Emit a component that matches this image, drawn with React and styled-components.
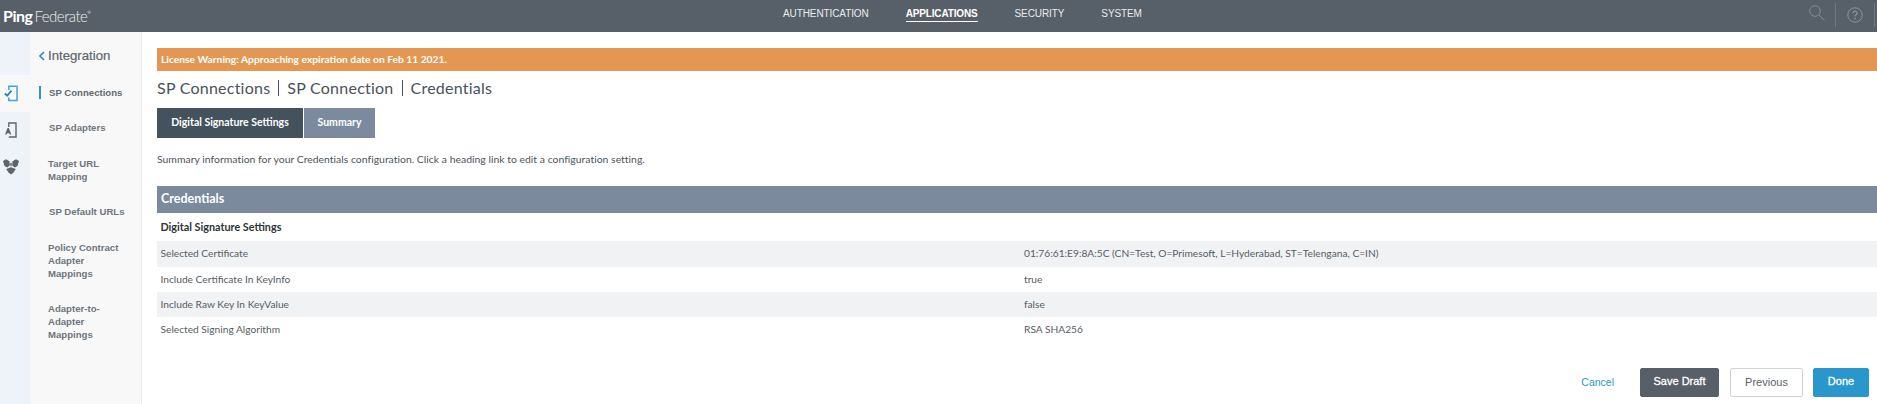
import React from "react";
import styled, { createGlobalStyle } from "styled-components";

const Global = createGlobalStyle`
  html, body { margin: 0; padding: 0; background: #fff; }
  body { font-family: "Lato", "Liberation Sans", sans-serif; overflow: hidden; }
  #root { width: 1877px; height: 404px; }
  * { box-sizing: border-box; }
`;
const Page = styled.div`display: flex; flex-direction: column; width: 1877px; height: 404px; overflow: hidden;`;
const Header = styled.header`
  height: 32px; flex: none; background: #576068; display: flex; align-items: center;
  justify-content: space-between; padding: 0 0 0 3px; position: relative;
`;
const Logo = styled.div`
  color: #fff; font: 400 15px/30px "Lato", sans-serif; letter-spacing: -0.5px; white-space: nowrap;
  b { font-size: 16px; font-weight: 700; margin-right: 2px; letter-spacing: -0.5px; }
  span { font-weight: 300; color: #eef0f1; }
  sup { font-size: 4px; vertical-align: 8px; line-height: 0; }
`;
const Nav = styled.nav`
  position: absolute; left: 783px; top: 0; height: 32px; display: flex; gap: 37px;
`;
const NavItem = styled.a`
  font: ${p => (p.$active ? 700 : 400)} 10px/15px "Liberation Sans", sans-serif;
  color: ${p => (p.$active ? "#fff" : "#e9ebed")};
  height: 16px; margin-top: 6px; white-space: nowrap; display: block;
  letter-spacing: ${p => (p.$active ? "-0.15px" : "-0.1px")};
  border-bottom: ${p => (p.$active ? "1px solid #fff" : "none")};
`;
const Tools = styled.div`display: flex; align-items: center; height: 32px; margin-right: 2px;`;
const SearchBox = styled.div`width: 26px; height: 32px; display: flex; align-items: flex-start; padding-top: 5px;`;
const Help = styled.div`
  width: 40px; height: 24px; margin-top: -2px; border-left: 1px solid #727a81; border-right: 1px solid #727a81;
  display: flex; align-items: center; justify-content: center;
`;
const Body = styled.div`flex: 1; display: flex; min-height: 0;`;
const Rail = styled.div`width: 30px; flex: none; background: #edf3f8; padding-top: 43px; display: flex; flex-direction: column;`;
const RailItem = styled.div`
  height: 37px; display: flex; align-items: center; justify-content: center;
  background: ${p => (p.$active ? "#f8f8f8" : "transparent")};
  padding: 0 9px 1px 0;
`;
const Side = styled.aside`
  width: 112px; flex: none; background: #f8f8f8; border-right: 1px solid #e9e9e9; padding: 15px 0 0 9px;
`;
const Back = styled.div`
  display: flex; align-items: center; gap: 3px; font: 400 13.2px/18px "Liberation Sans", sans-serif;
  color: #5f6770; margin: 0 0 21px 0; -webkit-text-stroke: 0.2px #5f6770;
`;
const SideList = styled.div`display: flex; flex-direction: column;`;
const SideItem = styled.div`
  font: 700 9.6px/13px "Liberation Sans", sans-serif; color: #6f767d;
  padding-left: ${p => (p.$single ? "10px" : "9px")}; margin-bottom: ${p => p.$gap}px; position: relative;
  ${p => p.$active && `color:#62696f; &::before { content: ""; position: absolute; left: 0; top: 0; width: 2px; height: 13px; background: #2996cc; }`}
`;
const Main = styled.main`flex: 1; min-width: 0; padding: 16px 0 0 15px; display: flex; flex-direction: column;`;
const Banner = styled.div`
  height: 23px; background: #e39752; color: #fff; padding-left: 4px;
  font: 700 10.25px/22px "Lato", sans-serif;
`;
const Title = styled.h1`
  display: flex; align-items: center; margin: 8px 0 0; height: 18px;
  font: 400 16px/18px "Lato", sans-serif; color: #4a5259; letter-spacing: 0.24px;
  i { width: 1px; height: 16px; background: #4a5259; margin: 0 8px; }
`;
const Tabs = styled.div`display: flex; gap: 1px; margin-top: 11px;`;
const Tab = styled.div`
  height: 30px; width: ${p => p.$w}px; background: ${p => (p.$active ? "#44525d" : "#7b8b9d")}; color: #fff;
  display: flex; align-items: center; justify-content: center; padding-bottom: 2px;
  font: 700 10.5px/14px "Lato", sans-serif;
`;
const Note = styled.p`margin: 14px 0 0; font: 400 10.4px/14px "Lato", sans-serif; color: #4c545b; letter-spacing: 0.02px;`;
const SectionBar = styled.div`
  margin-top: 20px; height: 27px; background: #7b8b9d; color: #fff; padding-left: 4px;
  font: 700 12.5px/26px "Lato", sans-serif;
`;
const SubHead = styled.div`height: 28px; padding-left: 3.5px; font: 700 10.8px/27px "Lato", sans-serif; color: #2e3338;`;
const Row = styled.div`
  display: grid; grid-template-columns: 863.5px 1fr; height: ${p => p.$h}px; padding: 0 0 2px 3.5px; align-items: center;
  background: ${p => (p.$alt ? "#f1f2f4" : "#fff")}; font: 400 10.2px/14px "Lato", sans-serif; color: #565d64;
`;
const Footer = styled.div`display: flex; justify-content: flex-end; align-items: flex-start; margin-top: 26px; padding-right: 8px;`;
const Cancel = styled.a`font: 400 10.5px/28px "Liberation Sans", sans-serif; color: #2c96cd; margin-right: 26px;`;
const Btn = styled.button`
  height: 29px; width: ${p => p.$w}px; margin-left: ${p => p.$ml}px; border-radius: 2px; padding: 0 0 ${p => p.$pb}px;
  border: 1px solid ${p => p.$border || p.$bg}; background: ${p => p.$bg}; color: ${p => p.$color};
  font: 400 11px/14px "Liberation Sans", sans-serif;
  -webkit-text-stroke: ${p => p.$stroke} ${p => p.$color};
`;

const rows = [
  ["Selected Certificate", "01:76:61:E9:8A:5C (CN=Test, O=Primesoft, L=Hyderabad, ST=Telengana, C=IN)", 26],
  ["Include Certificate In KeyInfo", "true", 25],
  ["Include Raw Key In KeyValue", "false", 25],
  ["Selected Signing Algorithm", "RSA SHA256", 25],
];

export default function App() {
  return (
    <Page>
      <Global />
      <Header>
        <Logo><b>Ping</b><span>Federate</span><sup>®</sup></Logo>
        <Nav>
          <NavItem>AUTHENTICATION</NavItem>
          <NavItem $active>APPLICATIONS</NavItem>
          <NavItem>SECURITY</NavItem>
          <NavItem>SYSTEM</NavItem>
        </Nav>
        <Tools>
          <SearchBox>
            <svg width="16" height="16" viewBox="0 0 16 16" fill="none" stroke="#858d94" strokeWidth="1">
              <circle cx="6" cy="6" r="5.300" /><path d="M10 10 L15.500 15.500" />
            </svg>
          </SearchBox>
          <Help>
            <svg width="16" height="16" viewBox="0 0 16 16" fill="none">
              <circle cx="8" cy="8" r="7.200" stroke="#8b9399" strokeWidth="1" />
              <path d="M5.900 6.200a2.100 2 0 1 1 3.200 1.700C8.300 8.400 8 8.800 8 9.600" stroke="#8b9399" strokeWidth="1.300" />
              <circle cx="8" cy="11.600" r=".9" fill="#8b9399" />
            </svg>
          </Help>
        </Tools>
      </Header>
      <Body>
        <Rail>
          <RailItem $active>
            <svg width="14" height="17" viewBox="0 0 14 17" fill="none">
              <path d="M4.800 5V1.200h8.200v14.300H4.800v-3" stroke="#45a1d6" strokeWidth="1.500" />
              <path d="M.8 8.500l2.400 2.200 4.300-5" stroke="#2b86bd" strokeWidth="1.900" />
            </svg>
          </RailItem>
          <RailItem>
            <svg width="12" height="16" viewBox="0 0 12 16" fill="none">
              <path d="M3.800 5V1h7.200v14H3.800" stroke="#5d656c" strokeWidth="1.400" />
              <path d="M0 12.500l2.500-6.500h1.300l2.500 6.500H4.700l-.4-1.200H2l-.4 1.200z" fill="#5d656c" />
            </svg>
          </RailItem>
          <RailItem>
            <svg width="16" height="17" viewBox="0 0 16 17" fill="#5d656c">
              <path d="M0 2 L3 .2 L6.500 2.200 L6.800 6.500 L4.200 8.500 L1.500 7z" />
              <path d="M16 2 L13 .2 L9.500 2.200 L9.200 6.500 L11.800 8.500 L14.500 7z" />
              <path d="M8 3.500l1 1.200-.6 2.500-.4.500-.4-.500-.6-2.500z" />
              <path d="M3.200 10 L8 8.200 L12.800 10 L10.500 13.500 L8 15.500 L5.500 13.500z" />
            </svg>
          </RailItem>
        </Rail>
        <Side>
          <Back>
            <svg width="6" height="10" viewBox="0 0 6 10" fill="none"><path d="M5 1L1 5l4 4" stroke="#2e8fc4" strokeWidth="1.700" /></svg>
            Integration
          </Back>
          <SideList>
            <SideItem $single $active $gap={22}>SP Connections</SideItem>
            <SideItem $single $gap={23}>SP Adapters</SideItem>
            <SideItem $gap={22}>Target URL<br />Mapping</SideItem>
            <SideItem $single $gap={23}>SP Default URLs</SideItem>
            <SideItem $gap={22}>Policy Contract<br />Adapter<br />Mappings</SideItem>
            <SideItem $gap={0}>Adapter-to-<br />Adapter<br />Mappings</SideItem>
          </SideList>
        </Side>
        <Main>
          <Banner>License Warning: Approaching expiration date on Feb 11 2021.</Banner>
          <Title>SP Connections<i />SP Connection<i />Credentials</Title>
          <Tabs>
            <Tab $active $w={146}>Digital Signature Settings</Tab>
            <Tab $w={71}>Summary</Tab>
          </Tabs>
          <Note>Summary information for your Credentials configuration. Click a heading link to edit a configuration setting.</Note>
          <SectionBar>Credentials</SectionBar>
          <SubHead>Digital Signature Settings</SubHead>
          {rows.map(([k, v, h], i) => (
            <Row key={k} $alt={i % 2 === 0} $h={h}><span>{k}</span><span>{v}</span></Row>
          ))}
          <Footer>
            <Cancel>Cancel</Cancel>
            <Btn $w={79} $ml={0} $bg="#576068" $color="#fff" $stroke="0.3px" $pb={3}>Save Draft</Btn>
            <Btn $w={73} $ml={11} $bg="#fff" $border="#d0d2d4" $color="#575e65" $stroke="0" $pb={1}>Previous</Btn>
            <Btn $w={56} $ml={10} $bg="#2996cc" $color="#fff" $stroke="0.3px" $pb={3}>Done</Btn>
          </Footer>
        </Main>
      </Body>
    </Page>
  );
}
